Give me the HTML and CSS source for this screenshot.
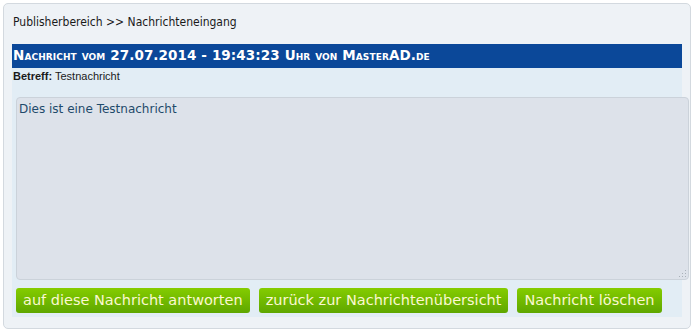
FILE: index.html
```html
<!DOCTYPE html>
<html>
<head>
<meta charset="utf-8">
<link rel="stylesheet" href="styles.css">
</head>
<body>
<div class="box">
  <div class="crumb">Publisherbereich &gt;&gt; Nachrichteneingang</div>
  <div class="panel">
    <div class="head">Nachricht vom 27.07.2014 - 19:43:23 Uhr von MasterAD.de</div>
    <div class="subject"><b>Betreff:</b> Testnachricht</div>
    <div class="msg">
      <div class="msgtext">Dies ist eine Testnachricht</div>
      <svg class="grip" width="8" height="8" viewBox="0 0 8 8">
        <rect x="6" y="0" width="1" height="1" fill="#a9b1b9"/>
        <rect x="3" y="3" width="1" height="1" fill="#a9b1b9"/>
        <rect x="6" y="3" width="1" height="1" fill="#a9b1b9"/>
        <rect x="0" y="6" width="1" height="1" fill="#a9b1b9"/>
        <rect x="3" y="6" width="1" height="1" fill="#a9b1b9"/>
        <rect x="6" y="6" width="1" height="1" fill="#a9b1b9"/>
      </svg>
    </div>
    <div class="buttons">
      <span class="btn">auf diese Nachricht antworten</span>
      <span class="btn">zurück zur Nachrichtenübersicht</span>
      <span class="btn">Nachricht löschen</span>
    </div>
  </div>
</div>
</body>
</html>
```
FILE: styles.css
```css
html, body { margin: 0; padding: 0; background: #ffffff; }
.box {
  margin: 3px;
  width: 686px;
  height: 324px;
  border: 1px solid #d3d9df;
  border-radius: 5px;
  background: #eef2f6;
  box-sizing: content-box;
}
.crumb {
  font-family: "DejaVu Sans Condensed", "DejaVu Sans", sans-serif;
  font-size: 12px;
  color: #1a1a1a;
  padding: 11px 0 0 9px;
  height: 29px;
  line-height: 14px;
}
.panel {
  margin-left: 8px;
  width: 670px;
  height: 273px;
  background: #e2edf5;
  display: flex;
  flex-direction: column;
}
.head {
  background: #0b4899;
  color: #ffffff;
  height: 24px;
  line-height: 22px;
  padding-left: 1px;
  font-family: "DejaVu Sans", sans-serif;
  font-size: 13.5px;
  letter-spacing: 0.1px;
  font-weight: bold;
  font-variant: small-caps;
}
.subject {
  font-family: "Liberation Sans", Arial, sans-serif;
  font-size: 11px;
  color: #1a1a1a;
  padding: 2px 0 0 1px;
  height: 27px;
  line-height: 13px;
}
.subject b { font-weight: bold; }
.msg {
  position: relative;
  margin-left: 4px;
  width: 671px;
  height: 181px;
  background: #dde2ea;
  border: 1px solid #cbd2da;
  border-radius: 4px;
}
.msgtext {
  font-family: "DejaVu Sans", sans-serif;
  font-size: 12px;
  color: #1f4a6b;
  padding: 4px 0 0 2px;
  line-height: 14px;
}
.grip { position: absolute; right: 1px; bottom: 1px; }
.buttons {
  display: flex;
  gap: 9px;
  margin: 8px 0 0 4px;
}
.btn {
  display: inline-block;
  height: 25px;
  line-height: 25px;
  padding: 0 7px;
  border-radius: 3px;
  background: linear-gradient(#84cc00, #5fa700);
  color: #fbf8d0;
  font-family: "DejaVu Sans", sans-serif;
  font-size: 14.5px;
}
```
